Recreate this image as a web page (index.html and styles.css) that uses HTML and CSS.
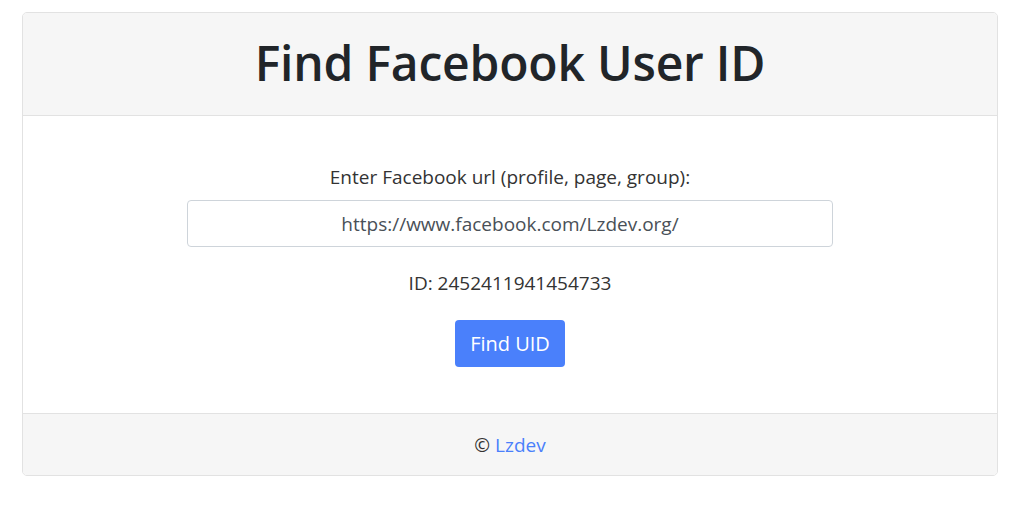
FILE: index.html
```html
<!DOCTYPE html>
<html lang="en">
<head>
<meta charset="utf-8">
<title>Find Facebook User ID</title>
<link rel="stylesheet" href="styles.css">
</head>
<body>
<div class="page">
  <div class="card">
    <div class="card-header">
      <h1 class="title">Find Facebook User ID</h1>
    </div>
    <div class="card-body">
      <label class="label" for="url">Enter Facebook url (profile, page, group):</label>
      <input id="url" class="input" type="text" value="https://www.facebook.com/Lzdev.org/">
      <div class="result">ID: 2452411941454733</div>
      <button class="btn" type="button">Find UID</button>
    </div>
    <div class="card-footer">
      <span>© <a class="link" href="#">Lzdev</a></span>
    </div>
  </div>
</div>
</body>
</html>
```

FILE: styles.css
```css
* { box-sizing: border-box; }
html, body { margin: 0; padding: 0; background: #fff; }
body {
  font-family: "Open Sans", "Noto Sans", sans-serif;
  color: #212529;
}
.page {
  padding: 12px 26px 0 22px;
}
.card {
  border: 1px solid #e2e2e2;
  border-radius: 5px;
  overflow: hidden;
  display: flex;
  flex-direction: column;
}
.card-header {
  background: #f6f6f6;
  border-bottom: 1px solid #e2e2e2;
  height: 103px;
  display: flex;
  align-items: center;
  justify-content: center;
}
.title {
  margin: 0 0 2px;
  font-size: 48px;
  font-weight: 600;
  line-height: 1.2;
  letter-spacing: -0.2px;
  color: #212529;
}
.card-body {
  height: 297px;
  display: flex;
  flex-direction: column;
  align-items: center;
  padding-top: 47px;
}
.label {
  font-size: 19px;
  line-height: 28px;
  color: #333;
  margin-bottom: 9px;
}
.input {
  width: 646px;
  height: 47px;
  border: 1px solid #ced4da;
  border-radius: 4px;
  text-align: center;
  font-family: inherit;
  font-size: 19px;
  color: #495057;
  padding: 6px 12px;
}
.result {
  font-size: 19px;
  line-height: 28px;
  color: #333;
  margin-top: 22px;
}
.btn {
  margin-top: 23px;
  width: 110px;
  height: 47px;
  background: #4a80fb;
  color: #fff;
  border: none;
  border-radius: 4px;
  font-family: inherit;
  font-size: 20px;
}
.card-footer {
  background: #f6f6f6;
  border-top: 1px solid #e2e2e2;
  height: 62px;
  display: flex;
  align-items: center;
  justify-content: center;
  font-size: 19px;
  color: #333;
}
.link {
  color: #4a80fb;
  text-decoration: none;
}
```
